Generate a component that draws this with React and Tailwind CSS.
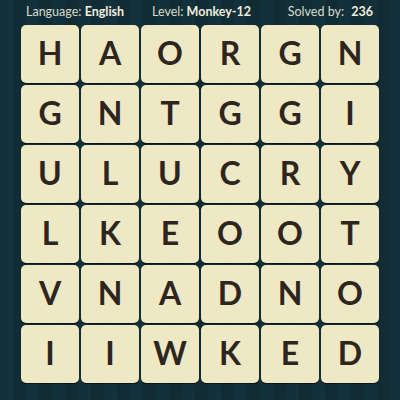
import React from 'react';

const rows = [
    ['H', 'A', 'O', 'R', 'G', 'N'],
    ['G', 'N', 'T', 'G', 'G', 'I'],
    ['U', 'L', 'U', 'C', 'R', 'Y'],
    ['L', 'K', 'E', 'O', 'O', 'T'],
    ['V', 'N', 'A', 'D', 'N', 'O'],
    ['I', 'I', 'W', 'K', 'E', 'D'],
];

const App = () => {
    return (
        <div className="w-[400px] h-[400px] overflow-hidden bg-[repeating-linear-gradient(90deg,#13313a_0px,#13313a_13px,#112c34_13px,#112c34_26px)] font-['Lato',sans-serif]">
            <div className="flex items-center h-[25px] pl-[26px] pr-[27px] text-[12.5px] text-[#d9dccb]">
                <div className="w-[126px]">Language: <span className="font-bold text-[#f1eedd]">English</span></div>
                <div>Level: <span className="font-bold text-[#f1eedd]">Monkey-12</span></div>
                <div className="ml-auto">Solved by: <span className="font-bold text-[#f1eedd] ml-1">236</span></div>
            </div>
            <div className="grid grid-cols-[repeat(6,58px)] gap-[2px] pl-[21px]">
                {rows.flat().map((ch, i) => (
                    <div
                        key={i}
                        className="h-[58px] rounded-[5px] bg-[#efe8c4] shadow-[0_1px_1px_rgba(0,0,0,0.55)] flex items-center justify-center text-[32px] font-bold text-[#2d2520] leading-none pb-[2px]"
                    >
                        {ch}
                    </div>
                ))}
            </div>
        </div>
    );
};

export default App;
